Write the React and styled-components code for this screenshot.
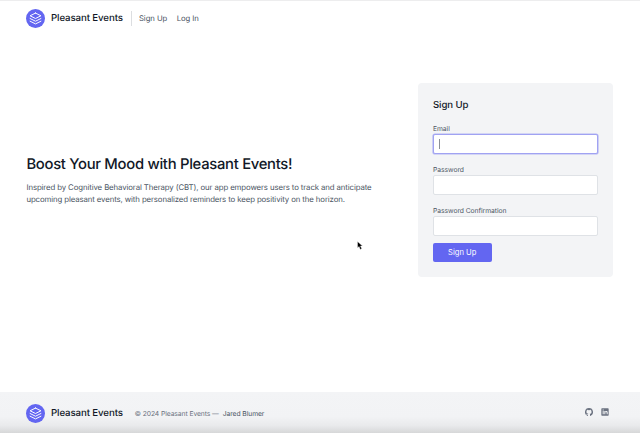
import React from "react";
import styled, { createGlobalStyle } from "styled-components";

const GlobalStyle = createGlobalStyle`
  * { box-sizing: border-box; }
  body { margin: 0; background: #fff; font-family: Inter, sans-serif; color: #4b5563; text-rendering: geometricPrecision; }
  h1, h2, p { margin: 0; font-weight: 500; color: #111827; }
`;
const Page = styled.div`
  height: 433px;
  display: flex;
  flex-direction: column;
  overflow: hidden;
  position: relative;
  border-top: 1px solid #ededee;
`;
const Header = styled.header`
  height: 35px;
  padding: 0 26.4px;
  display: flex;
  align-items: center;
`;
const Brand = styled.div`
  display: flex;
  align-items: center;
  gap: 5.6px;
  width: 97.6px;
  font-size: 9.7px;
  letter-spacing: -0.11px;
  line-height: 14px;
  font-weight: 550;
  color: #111827;
  white-space: nowrap;
`;
const BrandName = styled.span`
  padding-top: 1.6px;
`;
const LogoCircle = styled.span`
  width: 19px;
  height: 19px;
  flex: none;
  border-radius: 50%;
  background: #6366f1;
  display: grid;
  place-items: center;
`;
const Nav = styled.nav`
  display: flex;
  align-items: center;
  gap: 9.4px;
  height: 15px;
  margin-left: 7px;
  padding-left: 7px;
  border-left: 1.5px solid #dcdee1;
`;
const NavLink = styled.a`
  padding-top: 1.4px;
  font-size: 7.7px;
  letter-spacing: -0.05px;
  line-height: 14px;
  white-space: nowrap;
`;
const Main = styled.main`
  flex: 1;
  display: flex;
  justify-content: space-between;
  align-items: flex-start;
  padding: 47px 27px 0 26.4px;
`;
const Hero = styled.section`
  padding-top: 71px;
  width: 380px;
`;
const Headline = styled.h1`
  font-size: 14.8px;
  letter-spacing: -0.28px;
  line-height: 20px;
`;
const Copy = styled.p`
  margin-top: 7px;
  font-size: 7.8px;
  letter-spacing: -0.105px;
  line-height: 12.2px;
  font-weight: 400;
  color: #4b5563;
  white-space: nowrap;
`;
const Card = styled.form`
  width: 195px;
  height: 194px;
  padding: 15px;
  border-radius: 4px;
  background: #f3f4f6;
  display: flex;
  flex-direction: column;
  align-items: flex-start;
`;
const CardTitle = styled.h2`
  padding-top: 1px;
  font-size: 9.6px;
  letter-spacing: -0.08px;
  font-weight: 550;
  line-height: 14px;
  margin-bottom: 9px;
`;
const Field = styled.label`
  display: block;
  width: 100%;
  height: 40.8px;
  padding-top: 1px;
  font-size: 6.75px;
  letter-spacing: -0.05px;
  line-height: 11.4px;
`;
const Input = styled.span`
  display: flex;
  align-items: center;
  width: 100%;
  height: 20px;
  padding: 0 5px;
  border: 1px solid ${(p) => (p.$focused ? "#a0a2f2" : "#dfe2e6")};
  border-radius: 2px;
  background: #fff;
  box-shadow: ${(p) => (p.$focused ? "0 0 0 0.6px #b4b6f4" : "none")};
`;
const Caret = styled.span`
  width: 1px;
  height: 10px;
  background: #8b8f96;
`;
const Submit = styled.button`
  width: 58.5px;
  height: 19px;
  margin-top: -1.4px;
  flex: none;
  padding: 0;
  border: 0;
  border-radius: 2px;
  background: #6366f1;
  color: #fff;
  font: 400 7.6px/19px Inter, sans-serif;
`;
const Footer = styled.footer`
  height: 41px;
  padding: 1px 30.6px 0 26.4px;
  display: flex;
  align-items: center;
  background: linear-gradient(#f3f4f6 0, #f2f3f5 60%, #e9eaec 82%, #d6d7d8 100%);
`;
const Copyright = styled.span`
  margin-left: 10.8px;
  padding-top: 1.2px;
  font-size: 6.75px;
  letter-spacing: -0.08px;
  line-height: 12px;
  color: #6b7280;
  white-space: nowrap;
`;
const Author = styled.a`
  margin-left: 4px;
  color: #4b5563;
`;
const Socials = styled.div`
  display: flex;
  gap: 8.4px;
  margin: 0 0 2px auto;
  color: #6b7280;
`;
const Pointer = styled.svg`
  position: absolute;
  left: 357px;
  top: 240px;
`;

const Logo = () => (
  <Brand>
    <LogoCircle>
      <svg width="13" height="13" viewBox="0 0 24 24" fill="none" stroke="#fff" strokeWidth="1.8" strokeLinecap="round" strokeLinejoin="round">
        <path d="M12 2L2 7l10 5 10-5-10-5zM2 17l10 5 10-5M2 12l10 5 10-5" />
      </svg>
    </LogoCircle>
    <BrandName>Pleasant Events</BrandName>
  </Brand>
);

export default function App() {
  return (
    <>
      <GlobalStyle />
      <Page>
        <Header>
          <Logo />
          <Nav>
            <NavLink>Sign Up</NavLink>
            <NavLink>Log In</NavLink>
          </Nav>
        </Header>
        <Main>
          <Hero>
            <Headline>Boost Your Mood with Pleasant Events!</Headline>
            <Copy>
              Inspired by Cognitive Behavioral Therapy (CBT), our app empowers users to track and anticipate
              <br />
              upcoming pleasant events, with personalized reminders to keep positivity on the horizon.
            </Copy>
          </Hero>
          <Card>
            <CardTitle>Sign Up</CardTitle>
            <Field>Email<Input $focused><Caret /></Input></Field>
            <Field>Password<Input /></Field>
            <Field>Password Confirmation<Input /></Field>
            <Submit type="button">Sign Up</Submit>
          </Card>
        </Main>
        <Footer>
          <Logo />
          <Copyright>
            © 2024 Pleasant Events —<Author>Jared Blumer</Author>
          </Copyright>
          <Socials>
            <svg width="8" height="8" viewBox="0 0 24 24" fill="currentColor">
              <path d="M12 .3a12 12 0 0 0-3.8 23.4c.6.1.8-.3.8-.6v-2.2c-3.3.7-4-1.4-4-1.4-.6-1.4-1.4-1.8-1.4-1.8-1-.7.1-.7.1-.7 1.2 0 1.9 1.2 1.9 1.2 1 1.8 2.8 1.3 3.5 1 0-.8.4-1.3.7-1.6-2.7-.3-5.5-1.3-5.5-6 0-1.2.5-2.3 1.3-3.1-.2-.4-.6-1.6 0-3.2 0 0 1-.3 3.4 1.2a11.5 11.5 0 0 1 6 0c2.3-1.5 3.3-1.2 3.3-1.2.6 1.6.2 2.8 0 3.2.9.8 1.3 1.9 1.3 3.2 0 4.6-2.8 5.6-5.5 5.9.5.4.9 1 .9 2.2v3.3c0 .3.1.7.8.6A12 12 0 0 0 12 .3" />
            </svg>
            <svg width="8" height="8" viewBox="0 0 24 24">
              <rect x="1" y="1" width="22" height="22" rx="2" fill="currentColor" />
              <path d="M5 9h3v10H5zM5 4.5h3v3H5zM10 9h3v1.5C15 7.5 20 8.5 20 13v6h-3v-5c0-3-4-3-4 0v5h-3z" fill="#f3f4f6" />
            </svg>
          </Socials>
        </Footer>
        <Pointer width="6" height="9" viewBox="0 0 12 18">
          <path d="M1 1v13l3-3 2.500 6 3-1.300L7 10h4z" fill="#000" stroke="#fff" strokeWidth="0.8" />
        </Pointer>
      </Page>
    </>
  );
}
